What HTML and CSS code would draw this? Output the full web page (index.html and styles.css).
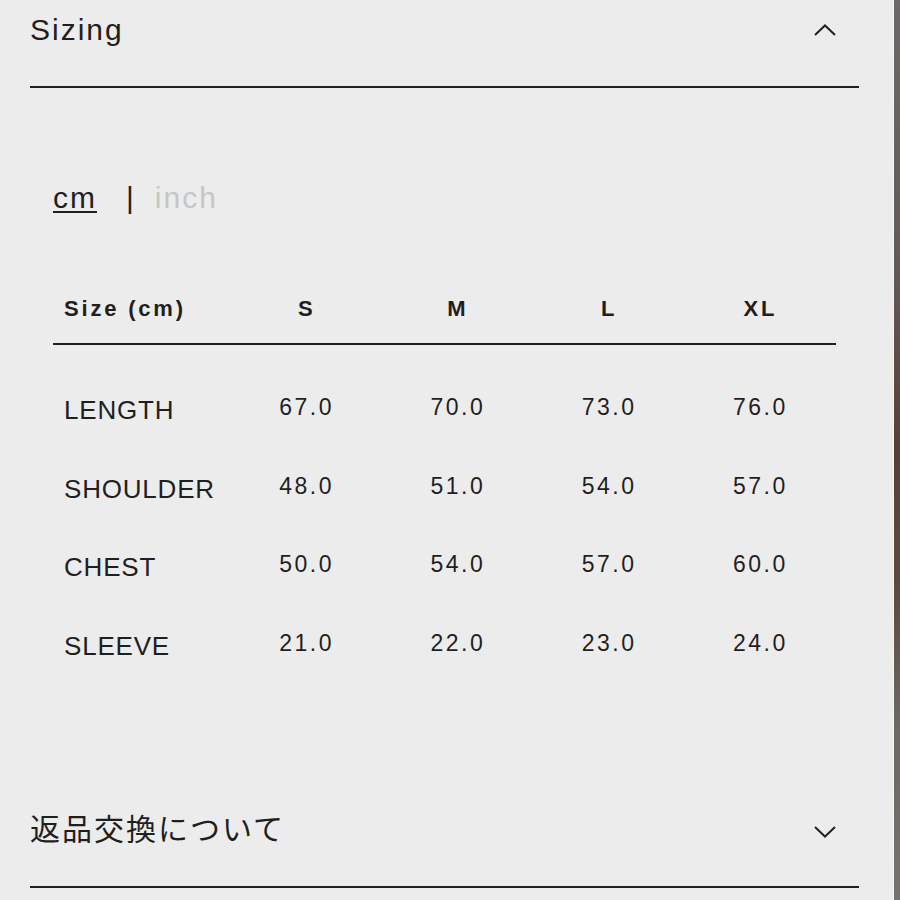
FILE: index.html
```html
<!DOCTYPE html>
<html lang="ja">
<head>
<meta charset="utf-8">
<title>Sizing</title>
<link rel="stylesheet" href="styles.css">
</head>
<body>
<main class="page">
  <section class="accordion">
    <div class="acc-head">
      <h2 class="acc-title">Sizing</h2>
      <svg class="chev" width="22" height="12" viewBox="0 0 22 12" aria-hidden="true"><polyline points="1,11 11,1.5 21,11" fill="none" stroke="#222" stroke-width="2"/></svg>
    </div>
    <div class="acc-body">
      <div class="units">
        <span class="unit unit-active">cm</span><span class="unit-sep">|</span><span class="unit unit-off">inch</span>
      </div>
      <table class="size-table">
        <colgroup><col class="col-label"><col><col><col><col></colgroup>
        <thead>
          <tr><th class="th-label">Size (cm)</th><th>S</th><th>M</th><th>L</th><th>XL</th></tr>
        </thead>
        <tbody>
          <tr><td class="row-label">LENGTH</td><td>67.0</td><td>70.0</td><td>73.0</td><td>76.0</td></tr>
          <tr><td class="row-label">SHOULDER</td><td>48.0</td><td>51.0</td><td>54.0</td><td>57.0</td></tr>
          <tr><td class="row-label">CHEST</td><td>50.0</td><td>54.0</td><td>57.0</td><td>60.0</td></tr>
          <tr><td class="row-label">SLEEVE</td><td>21.0</td><td>22.0</td><td>23.0</td><td>24.0</td></tr>
        </tbody>
      </table>
    </div>
  </section>
  <section class="accordion">
    <div class="acc-head">
      <h2 class="acc-title">返品交換について</h2>
      <svg class="chev chev-down" width="22" height="12" viewBox="0 0 22 12" aria-hidden="true"><polyline points="1,1 11,10.5 21,1" fill="none" stroke="#222" stroke-width="2"/></svg>
    </div>
  </section>
</main>
<div class="edge"></div>
</body>
</html>
```
FILE: styles.css
```css
html, body {
  margin: 0;
  padding: 0;
}
body {
  background: #ececec;
  color: #1f1f1f;
  font-family: "Liberation Sans", Arial, "Noto Sans CJK JP", sans-serif;
  display: flex;
  height: 900px;
  overflow: hidden;
}
.page {
  flex: 0 0 893px;
  border-right: 1px solid #f6f6f6;
}
.edge {
  flex: 0 0 6px;
  height: 900px;
  background: linear-gradient(180deg, #6b6966 0%, #625a55 30%, #573f37 50%, #5b4a41 65%, #6c675f 80%, #77736c 100%);
}
.accordion {
  margin: 0 34px 0 30px;
}
.acc-head {
  display: flex;
  align-items: center;
  justify-content: space-between;
  padding: 12px 0 38px;
  border-bottom: 2px solid #1f1f1f;
}
.acc-title {
  margin: 0;
  font-size: 30px;
  line-height: 36px;
  font-weight: normal;
  letter-spacing: 2px;
}
.chev {
  display: block;
  margin-right: 23px;
}
.chev-down {
  margin-top: 4px;
}
.acc-body {
  padding: 0 23px 117px;
}
.units {
  margin-top: 92px;
  font-size: 30px;
  line-height: 36px;
  letter-spacing: 2px;
}
.unit-active {
  text-decoration: underline;
  text-decoration-thickness: 2px;
  text-underline-offset: 3px;
  margin-right: 29px;
}
.unit-sep {
  margin-right: 19px;
}
.unit-off {
  color: #c6c6c6;
}
.size-table {
  margin-top: 80px;
  width: 100%;
  table-layout: fixed;
  border-collapse: separate;
  border-spacing: 0;
}
.col-label {
  width: 178px;
}
.size-table th {
  font-size: 22px;
  line-height: 26px;
  font-weight: bold;
  letter-spacing: 2.8px;
  text-align: center;
  padding: 0 0 21px;
  border-bottom: 2px solid #1f1f1f;
}
.size-table th.th-label {
  text-align: left;
  padding-left: 11px;
}
.size-table td {
  font-size: 23px;
  line-height: 30px;
  letter-spacing: 2.5px;
  text-align: center;
  vertical-align: top;
  padding: 24px 0 24.67px;
}
.size-table tbody tr:first-child td {
  padding-top: 47px;
}
.size-table td.row-label {
  font-size: 26px;
  letter-spacing: 0.8px;
  text-align: left;
  padding: 27px 0 21.67px 11px;
}
.size-table tbody tr:first-child td.row-label {
  padding-top: 50px;
}
```
